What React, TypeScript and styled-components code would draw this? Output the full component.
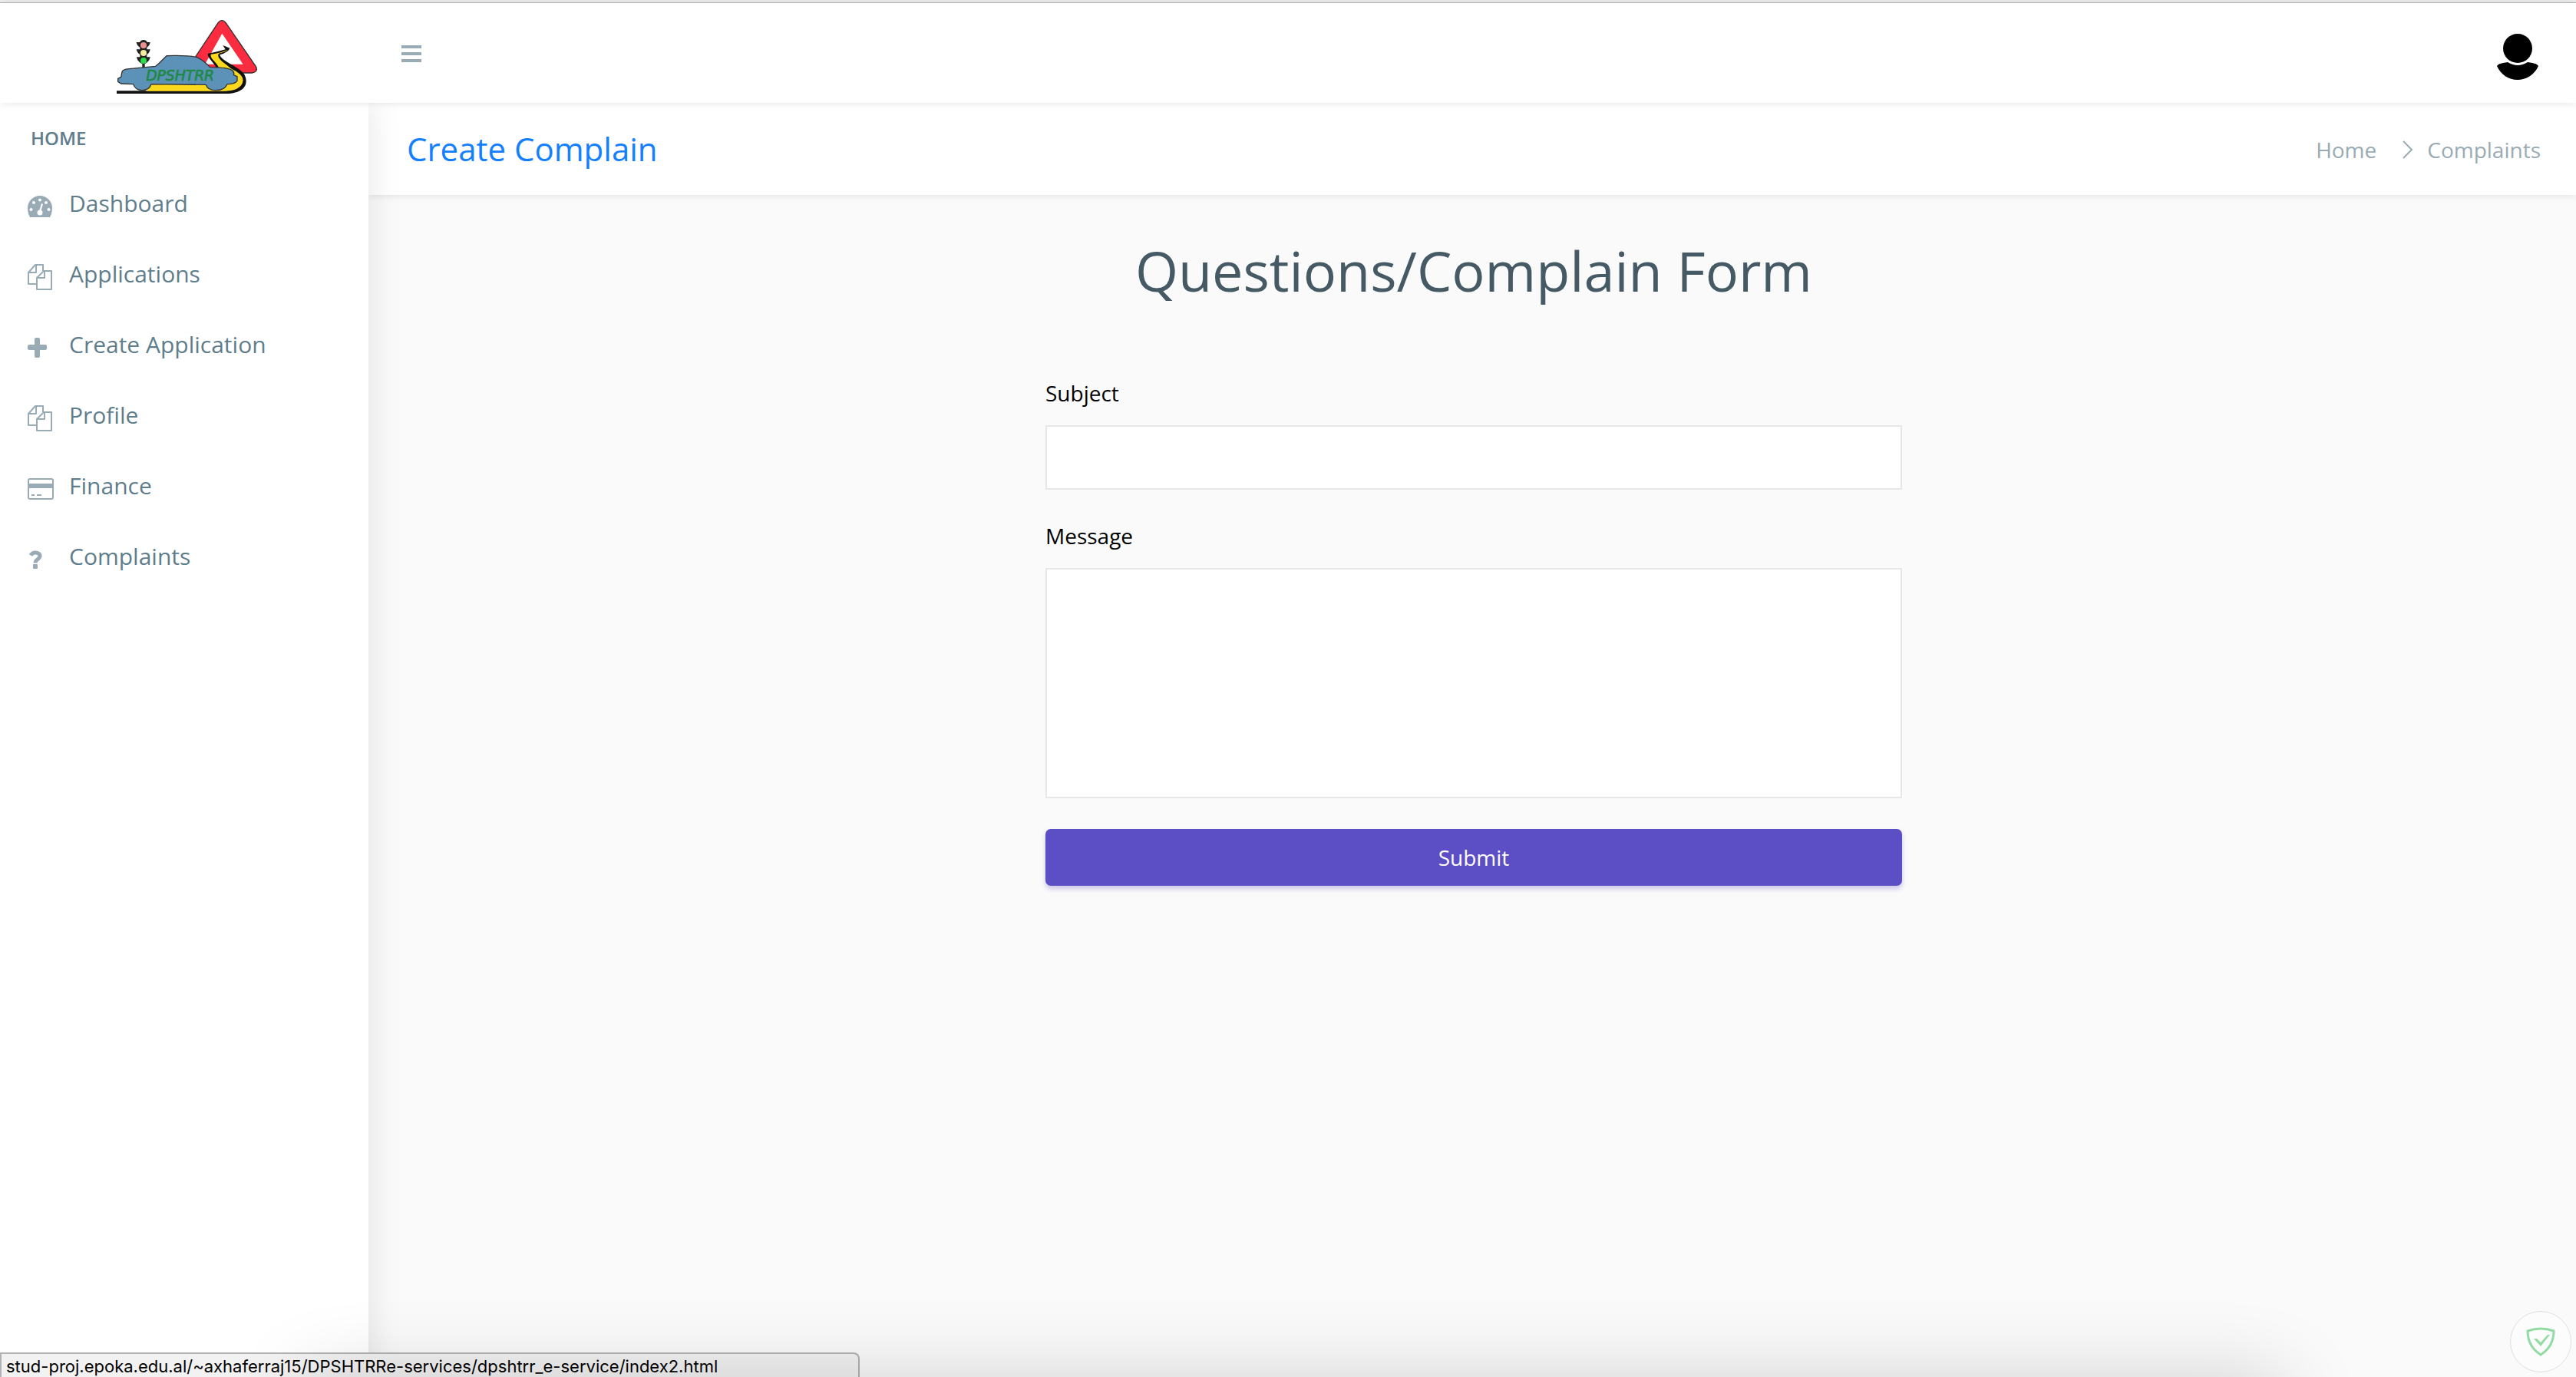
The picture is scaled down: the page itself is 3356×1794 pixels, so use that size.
import React from "react";
import styled, { createGlobalStyle } from "styled-components";

const GlobalStyle = createGlobalStyle`
  * { box-sizing: border-box; }
  html, body, #root { min-height: 100vh; }
  body {
    margin: 0;
    background: #fafafa;
    color: #67757c;
    font-family: "Open Sans", "Noto Sans", sans-serif;
    font-size: 28px;
    line-height: 40px;
  }
`;

const Page = styled.div`
  display: flex;
  flex-direction: column;
  min-height: 100vh;
  border-top: 3px solid #f0f0f0;
`;

const Header = styled.header`
  position: relative;
  z-index: 3;
  display: flex;
  align-items: center;
  justify-content: space-between;
  height: 131px;
  padding-right: 48px;
  border-top: 1px solid #b2b2b2;
  background: #fff;
  box-shadow: 1px 0 10px rgba(0, 0, 0, 0.12);
`;

const HeaderStart = styled.div`
  display: flex;
  align-items: center;
`;

const Brand = styled.a`
  display: flex;
  justify-content: center;
  width: 480px;
  padding: 10px 0 0 6px;
`;

const IconButton = styled.button`
  display: flex;
  padding: 0;
  border: 0;
  background: none;
  color: #99abb4;
  cursor: pointer;
`;

const MenuButton = styled(IconButton)`
  padding: 2px 42px 0;
`;

const AccountButton = styled(IconButton)`
  padding-top: 10px;
`;

const Body = styled.div`
  display: flex;
  flex: 1;
`;

const Sidebar = styled.nav`
  position: relative;
  z-index: 2;
  flex: 0 0 480px;
  padding-top: 26px;
  background: #fff;
  box-shadow: 2px 0 40px rgba(0, 0, 0, 0.1);
`;

const NavTitle = styled.h2`
  margin: 0 0 19px;
  padding-left: 40px;
  color: #607d8b;
  font-size: 24px;
  font-weight: 600;
  line-height: 40px;
`;

const NavList = styled.ul`
  margin: 0;
  padding: 0;
  list-style: none;
`;

const NavLink = styled.a`
  display: flex;
  align-items: center;
  height: 92px;
  padding-left: 36px;
  color: #607d8b;
  font-size: 30px;
  text-decoration: none;
`;

const NavIcon = styled.span`
  display: flex;
  width: 54px;
  padding-top: 8px;
  color: #99abb4;
`;

const Main = styled.main`
  flex: 1;
  min-width: 0;
`;

const TitleBar = styled.div`
  display: flex;
  align-items: center;
  justify-content: space-between;
  height: 120px;
  padding: 0 46px 0 50px;
  background: #fff;
  box-shadow: 1px 0 10px rgba(0, 0, 0, 0.12);
`;

const PageTitle = styled.h3`
  margin: 0;
  color: #1580ff;
  font-size: 42px;
  font-weight: 400;
`;

const Breadcrumb = styled.ol`
  display: flex;
  align-items: center;
  margin: 0;
  padding: 2px 0 0;
  list-style: none;
`;

const Crumb = styled.li`
  display: flex;
  align-items: center;
  color: #99abb4;

  a { color: inherit; text-decoration: none; }
  svg { margin: 0 18px 0 34px; }
`;

const Content = styled.div`
  display: flex;
  justify-content: center;
  padding: 54px 0 54px 4px;
`;

const Form = styled.form`
  display: flex;
  flex-direction: column;
  width: 40%;
  min-width: 600px;
  max-width: 1116px;
`;

const FormTitle = styled.h1`
  margin: 0 0 96px;
  color: #455a64;
  font-size: 72px;
  font-weight: 400;
  line-height: 88px;
  text-align: center;
`;

const Label = styled.label`
  margin-bottom: 22px;
  color: #000;
`;

const field = `
  width: 100%;
  margin: 0 0 40px;
  padding: 12px 24px;
  border: 2px solid #e7e7e7;
  border-radius: 0;
  background: #fff;
  color: #67757c;
  font: inherit;
`;

const TextInput = styled.input`
  ${field}
  height: 84px;
`;

const TextArea = styled.textarea`
  ${field}
  height: 300px;
  resize: none;
`;

const SubmitButton = styled.button`
  height: 74px;
  border: 0;
  border-radius: 7px;
  background: #5c4ec4;
  box-shadow: 0 4px 6px rgba(92, 78, 196, 0.3);
  color: #fff;
  font: inherit;
  cursor: pointer;
`;

const StatusBar = styled.div`
  position: fixed;
  bottom: 0;
  left: 0;
  z-index: 5;
  width: 1120px;
  height: 32px;
  padding-left: 6px;
  border: 2px solid #b2b2b2;
  border-bottom: 0;
  border-top-right-radius: 8px;
  background: #f2f2f2;
  color: #000;
  font-family: Inter, Roboto, sans-serif;
  font-size: 22px;
  line-height: 32px;
`;

const BottomShade = styled.div`
  position: fixed;
  top: 100%;
  right: 380px;
  left: 400px;
  z-index: 6;
  height: 100px;
  box-shadow: 0 0 100px rgba(0, 0, 0, 0.17);
  pointer-events: none;
`;

const ShieldButton = styled.button`
  position: fixed;
  right: 6px;
  bottom: 6px;
  display: flex;
  align-items: center;
  justify-content: center;
  width: 80px;
  height: 80px;
  padding: 0;
  border: 1px solid #dedede;
  border-radius: 50%;
  background: #fcfcfc;
`;

function Logo() {
  return (
    <svg width="185" height="98" viewBox="60 74 555 294" role="img" aria-label="DPSHTRR">
      <path d="M458 90Q474 68 491 90L608 260Q616 280 592 284H440L370 222z" fill="#fb2b40" stroke="#333" strokeWidth="4" />
      <path d="M475 130L557 250H408z" fill="#fff" />
      <path d="M63 354H490Q556 348 556 312C552 285 505 275 470 262L452 262C440 240 415 222 420 208Q450 204 488 192L478 176 505 187Q502 202 466 213C470 238 540 258 562 290C580 325 565 364 490 365H63z" fill="#111" />
      <path d="M432 211Q470 206 496 194Q490 202 462 208C450 226 486 246 512 268Q560 290 556 316C550 345 520 355 480 355H180L200 322H440L462 262C452 240 424 225 432 211z" fill="#fcd91c" />
      <path d="M140 164h14q2-8 14-9 12 1 14 9h12q-2 14-13 20v8h13q-2 14-13 20v10h13q-2 14-14 22l-7 5v14h-10v-14l-8-5q-12-8-14-22h13v-10q-11-6-14-20h14v-8q-12-6-14-20z" fill="#222" />
      <circle cx="168" cy="176" r="12" fill="#ee9090" />
      <circle cx="168" cy="206" r="12" fill="#f3eca0" />
      <circle cx="168" cy="236" r="12" fill="#2bdc4b" />
      <path d="M68 318V306L80 300 84 280Q86 270 112 268L215 258Q225 250 258 217 330 214 375 222 400 232 428 262 500 262 516 275 524 284 520 292L534 298V315Q525 328 495 328 485 352 450 352 418 352 412 330L198 328Q190 352 160 352 135 350 128 328L80 326z" fill="#5c91b8" stroke="#333" strokeWidth="4" strokeLinejoin="round" />
      <text x="311" y="315" textAnchor="middle" fill="#1c8a42" stroke="#1c8a42" strokeWidth="2" fontFamily="DejaVu Sans, sans-serif" fontStyle="italic" fontSize="56">DPSHTRR</text>
    </svg>
  );
}

function MenuIcon() {
  return (
    <svg width="28" height="22" viewBox="0 0 28 22" fill="none" stroke="currentColor" strokeWidth="4" aria-hidden="true">
      <path d="M1 2h26M1 11h26M1 20h26" />
    </svg>
  );
}

function UserIcon() {
  return (
    <svg width="56" height="62" viewBox="0 0 56 62" fill="#000" aria-hidden="true">
      <circle cx="28" cy="20" r="19" />
      <path d="M15 38q13 8 26 0c7 1 12 2 14 5-5 11-15 18-27 18S6 54 1 43c2-3 7-4 14-5z" />
    </svg>
  );
}

function GaugeIcon() {
  return (
    <svg width="32" height="28" viewBox="0 0 32 28" aria-hidden="true">
      <path d="M3 28Q0 23 0 16a16 16 0 0 1 32 0q0 7-3 12z" fill="currentColor" />
      <g fill="#fff">
        <circle cx="4.500" cy="18" r="2" />
        <circle cx="8" cy="9" r="2" />
        <circle cx="16" cy="5.500" r="2" />
        <circle cx="24" cy="9" r="2" />
        <circle cx="27.500" cy="18" r="2" />
        <circle cx="16" cy="22" r="3.500" />
        <path d="M18 10l2 1-3 10-2-1z" />
      </g>
    </svg>
  );
}

function CopyIcon() {
  return (
    <svg width="32" height="34" viewBox="0 0 32 34" fill="none" stroke="currentColor" strokeWidth="2" strokeLinejoin="round" aria-hidden="true">
      <path d="M12 26H1V11L10 1h10v8M1 11h10V1" />
      <path d="M12 18l9-9h10v24H12zM12 18h10V9" />
    </svg>
  );
}

function PlusIcon() {
  return (
    <svg width="26" height="26" viewBox="0 0 26 26" fill="currentColor" aria-hidden="true">
      <rect x="9" y="0" width="7" height="26" rx="2" />
      <rect x="0" y="9" width="25" height="7" rx="2" />
    </svg>
  );
}

function CardIcon() {
  return (
    <svg width="34" height="28" viewBox="0 0 34 28" fill="none" stroke="currentColor" strokeWidth="2" aria-hidden="true">
      <rect x="1" y="1" width="32" height="26" rx="2" />
      <path d="M1 10h32" strokeWidth="6" />
      <path d="M5 22h4M12 22h6" />
    </svg>
  );
}

function QuestionIcon() {
  return (
    <svg width="20" height="24" viewBox="0 0 20 24" aria-hidden="true">
      <path d="M4 6.500Q6 3 10 3c4 0 6 2 6 4.500 0 4-6 4-6 9" fill="none" stroke="currentColor" strokeWidth="5" />
      <rect x="7" y="18" width="6" height="6" rx="1" fill="currentColor" />
    </svg>
  );
}

function ChevronIcon() {
  return (
    <svg width="14" height="24" viewBox="0 0 14 24" fill="none" stroke="currentColor" strokeWidth="2" aria-hidden="true">
      <path d="M1 1l11 11L1 23" />
    </svg>
  );
}

function ShieldIcon() {
  return (
    <svg width="38" height="38" viewBox="0 0 38 38" fill="none" stroke="#93dba5" strokeWidth="3" aria-hidden="true">
      <path d="M2 5q17-6 34 0c0 15-6 24-17 31C8 29 2 20 2 5z" />
      <path d="M10 15h4l5 5 9-10h3L19 25z" fill="#93dba5" stroke="none" />
    </svg>
  );
}

const navItems = [
  { label: "Dashboard", icon: <GaugeIcon /> },
  { label: "Applications", icon: <CopyIcon /> },
  { label: "Create Application", icon: <PlusIcon /> },
  { label: "Profile", icon: <CopyIcon /> },
  { label: "Finance", icon: <CardIcon /> },
  { label: "Complaints", icon: <QuestionIcon /> },
];

export default function App() {
  return (
    <Page>
      <GlobalStyle />
      <Header>
        <HeaderStart>
          <Brand href="#"><Logo /></Brand>
          <MenuButton type="button" aria-label="Toggle menu"><MenuIcon /></MenuButton>
        </HeaderStart>
        <AccountButton type="button" aria-label="Account"><UserIcon /></AccountButton>
      </Header>
      <Body>
        <Sidebar>
          <NavTitle>HOME</NavTitle>
          <NavList>
            {navItems.map((item) => (
              <li key={item.label}>
                <NavLink href="#">
                  <NavIcon>{item.icon}</NavIcon>
                  {item.label}
                </NavLink>
              </li>
            ))}
          </NavList>
        </Sidebar>
        <Main>
          <TitleBar>
            <PageTitle>Create Complain</PageTitle>
            <Breadcrumb>
              <Crumb><a href="#">Home</a></Crumb>
              <Crumb><ChevronIcon />Complaints</Crumb>
            </Breadcrumb>
          </TitleBar>
          <Content>
            <Form onSubmit={(event) => event.preventDefault()}>
              <FormTitle>Questions/Complain Form</FormTitle>
              <Label htmlFor="subject">Subject</Label>
              <TextInput id="subject" type="text" />
              <Label htmlFor="message">Message</Label>
              <TextArea id="message" />
              <SubmitButton type="submit">Submit</SubmitButton>
            </Form>
          </Content>
        </Main>
      </Body>
      <StatusBar>stud-proj.epoka.edu.al/~axhaferraj15/DPSHTRRe-services/dpshtrr_e-service/index2.html</StatusBar>
      <BottomShade />
      <ShieldButton type="button" aria-label="Protection status"><ShieldIcon /></ShieldButton>
    </Page>
  );
}
